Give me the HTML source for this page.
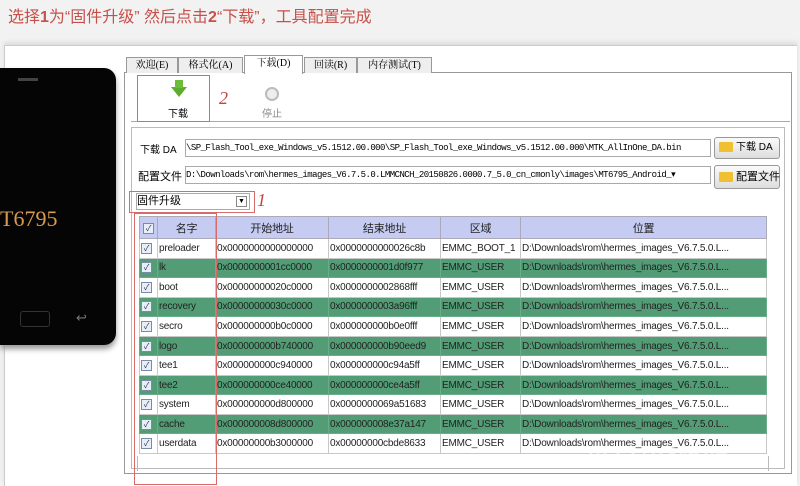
<!DOCTYPE html>
<html><head><meta charset="utf-8"><style>
body{margin:0;width:800px;height:471px;overflow:hidden;background:#f2f2f2;font-family:"Liberation Sans","Noto Sans CJK SC",sans-serif;position:relative}
.a{position:absolute}
.title{left:8px;top:3px;font-size:16px;color:#c8504a;white-space:nowrap}
.win{left:4px;top:45px;width:792px;height:440px;background:#fff;border-top:1px solid #ccc;border-left:1px solid #ccc;box-shadow:0 -3px 4px #ddd}
.phone{left:0;top:68px;width:116px;height:277px;background:#050505;border-radius:0 12px 12px 0;box-shadow:0 4px 6px #999}
.tab{top:57px;height:15px;border:1px solid #999;border-bottom:none;background:#eee;font-size:10px;text-align:center;line-height:15px;font-family:"Liberation Serif","Noto Serif CJK SC",serif;white-space:nowrap}
.box{border:1px solid #aaa}
.red{border:1.5px solid #d86a6a}
.mono{font-family:"Liberation Mono","Noto Sans CJK SC",monospace;font-size:9px;letter-spacing:-0.55px}
table{border-collapse:collapse;font-size:10px;color:#222;letter-spacing:-0.2px}
td{height:18.56px;border:1px solid #c8c8c8;padding:0 1px;white-space:nowrap;overflow:hidden}
tr.g td{background:#529d75;border-color:#6aac88}
th{background:#c6cbf2;font-weight:normal;height:19px;border:1px solid #aab;font-size:11px}
.cb{display:inline-block;width:9px;height:9px;border:1px solid #7a8aa8;background:#e8eef8;font-size:8px;line-height:9px;text-align:center;color:#335}
.btn{background:linear-gradient(#fafafa,#ddd);border:1px solid #999;border-radius:3px;font-size:10px;line-height:20px;white-space:nowrap}
.fold{display:inline-block;width:14px;height:10px;background:#f0c030;border-radius:1px;vertical-align:middle;margin:0 3px 0 4px}
</style></head><body>
<div class="a title">选择<b>1</b>为“固件升级” 然后点击<b>2</b>“下载”，工具配置完成</div>
<div class="a win"></div>
<div class="a phone">
 <div class="a" style="left:18px;top:10px;width:20px;height:3px;background:#444"></div>
 <div class="a" style="left:0;top:138px;color:#d89a50;font:22px 'Liberation Serif',serif">T6795</div>
 <div class="a" style="left:20px;top:243px;width:28px;height:14px;border:1px solid #333;border-radius:3px"></div>
 <div class="a" style="left:76px;top:242px;color:#777;font-size:13px">↩</div>
</div>
<div class="a" style="left:124px;top:72px;width:666px;height:400px;border:1px solid #999;background:#fff"></div>
<div class="a tab" style="left:126px;width:50px">欢迎(E)</div>
<div class="a tab" style="left:178px;width:63px">格式化(A)</div>
<div class="a tab" style="left:244px;width:57px;top:55px;height:18px;background:#fff">下载(D)</div>
<div class="a tab" style="left:304px;width:51px">回读(R)</div>
<div class="a tab" style="left:357px;width:73px">内存测试(T)</div>
<div class="a" style="left:131px;top:121px;width:659px;border-top:1px solid #aaa"></div>
<div class="a red" style="left:137px;top:75px;width:71px;height:45px"></div>
<div class="a" style="left:171px;top:87px;width:0;height:0;border-left:8px solid transparent;border-right:8px solid transparent;border-top:10px solid #5cae2a"></div>
<div class="a" style="left:175px;top:80px;width:8px;height:8px;background:#6cbd3a"></div>
<div class="a" style="left:168px;top:105px;font-size:10px">下载</div>
<div class="a" style="left:219px;top:88px;font:italic 18px 'Liberation Serif',serif;color:#c84040">2</div>
<div class="a" style="left:265px;top:87px;width:10px;height:10px;border-radius:50%;border:2px solid #bbb;background:#eee"></div>
<div class="a" style="left:262px;top:105px;font-size:10px;color:#888">停止</div>
<div class="a" style="left:131px;top:127px;width:652px;height:340px;border:1px solid #bbb"></div>
<div class="a" style="left:140px;top:141px;font-size:10px">下载 DA</div>
<div class="a box mono" style="left:185px;top:139px;width:524px;height:16px;line-height:16px;overflow:hidden;white-space:nowrap">\SP_Flash_Tool_exe_Windows_v5.1512.00.000\SP_Flash_Tool_exe_Windows_v5.1512.00.000\MTK_AllInOne_DA.bin</div>
<div class="a btn" style="left:714px;top:137px;width:64px;height:20px"><span class="fold"></span>下载 DA</div>
<div class="a" style="left:138px;top:168px;font-size:11px">配置文件</div>
<div class="a box mono" style="left:185px;top:166px;width:524px;height:16px;line-height:16px;overflow:hidden;white-space:nowrap">D:\Downloads\rom\hermes_images_V6.7.5.0.LMMCNCH_20150826.0000.7_5.0_cn_cmonly\images\MT6795_Android_▾</div>
<div class="a btn" style="left:714px;top:165px;width:64px;height:22px;font-size:11px;line-height:22px"><span class="fold"></span>配置文件</div>
<div class="a red" style="left:129px;top:191px;width:124px;height:20px"></div>
<div class="a" style="left:136px;top:193px;width:112px;height:15px;font-size:11px;line-height:15px;border:1px solid #aaa">固件升级<span style="position:absolute;right:2px;top:2px;width:9px;height:9px;border:1px solid #888;font-size:7px;line-height:9px;text-align:center">▼</span></div>
<div class="a" style="left:257px;top:190px;font:italic 18px 'Liberation Serif',serif;color:#c84040">1</div>
<table class="a" style="left:139px;top:216px;width:628px;table-layout:fixed">
<colgroup><col style="width:18px"><col style="width:58px"><col style="width:113px"><col style="width:112px"><col style="width:80px"><col></colgroup>
<tr><th><span class="cb">✓</span></th><th>名字</th><th>开始地址</th><th>结束地址</th><th>区域</th><th>位置</th></tr>
<tr><td><span class="cb">✓</span></td><td>preloader</td><td>0x0000000000000000</td><td>0x0000000000026c8b</td><td>EMMC_BOOT_1</td><td>D:\Downloads\rom\hermes_images_V6.7.5.0.L...</td></tr>
<tr class="g"><td><span class="cb">✓</span></td><td>lk</td><td>0x0000000001cc0000</td><td>0x0000000001d0f977</td><td>EMMC_USER</td><td>D:\Downloads\rom\hermes_images_V6.7.5.0.L...</td></tr>
<tr><td><span class="cb">✓</span></td><td>boot</td><td>0x00000000020c0000</td><td>0x0000000002868fff</td><td>EMMC_USER</td><td>D:\Downloads\rom\hermes_images_V6.7.5.0.L...</td></tr>
<tr class="g"><td><span class="cb">✓</span></td><td>recovery</td><td>0x00000000030c0000</td><td>0x0000000003a96fff</td><td>EMMC_USER</td><td>D:\Downloads\rom\hermes_images_V6.7.5.0.L...</td></tr>
<tr><td><span class="cb">✓</span></td><td>secro</td><td>0x000000000b0c0000</td><td>0x000000000b0e0fff</td><td>EMMC_USER</td><td>D:\Downloads\rom\hermes_images_V6.7.5.0.L...</td></tr>
<tr class="g"><td><span class="cb">✓</span></td><td>logo</td><td>0x000000000b740000</td><td>0x000000000b90eed9</td><td>EMMC_USER</td><td>D:\Downloads\rom\hermes_images_V6.7.5.0.L...</td></tr>
<tr><td><span class="cb">✓</span></td><td>tee1</td><td>0x000000000c940000</td><td>0x000000000c94a5ff</td><td>EMMC_USER</td><td>D:\Downloads\rom\hermes_images_V6.7.5.0.L...</td></tr>
<tr class="g"><td><span class="cb">✓</span></td><td>tee2</td><td>0x000000000ce40000</td><td>0x000000000ce4a5ff</td><td>EMMC_USER</td><td>D:\Downloads\rom\hermes_images_V6.7.5.0.L...</td></tr>
<tr><td><span class="cb">✓</span></td><td>system</td><td>0x000000000d800000</td><td>0x0000000069a51683</td><td>EMMC_USER</td><td>D:\Downloads\rom\hermes_images_V6.7.5.0.L...</td></tr>
<tr class="g"><td><span class="cb">✓</span></td><td>cache</td><td>0x000000008d800000</td><td>0x000000008e37a147</td><td>EMMC_USER</td><td>D:\Downloads\rom\hermes_images_V6.7.5.0.L...</td></tr>
<tr><td><span class="cb">✓</span></td><td>userdata</td><td>0x00000000b3000000</td><td>0x00000000cbde8633</td><td>EMMC_USER</td><td>D:\Downloads\rom\hermes_images_V6.7.5.0.L...</td></tr>
</table>
<div class="a" style="left:137px;top:456px;width:630px;height:15px;border-left:1px solid #bbb;border-right:1px solid #bbb"></div>
<div class="a red" style="left:134px;top:213px;width:81px;height:270px"></div>
<div class="a" style="left:588px;top:440px;font-size:20px;color:rgba(255,255,255,.6);font-weight:bold">中关村在线论坛</div>
</body></html>
